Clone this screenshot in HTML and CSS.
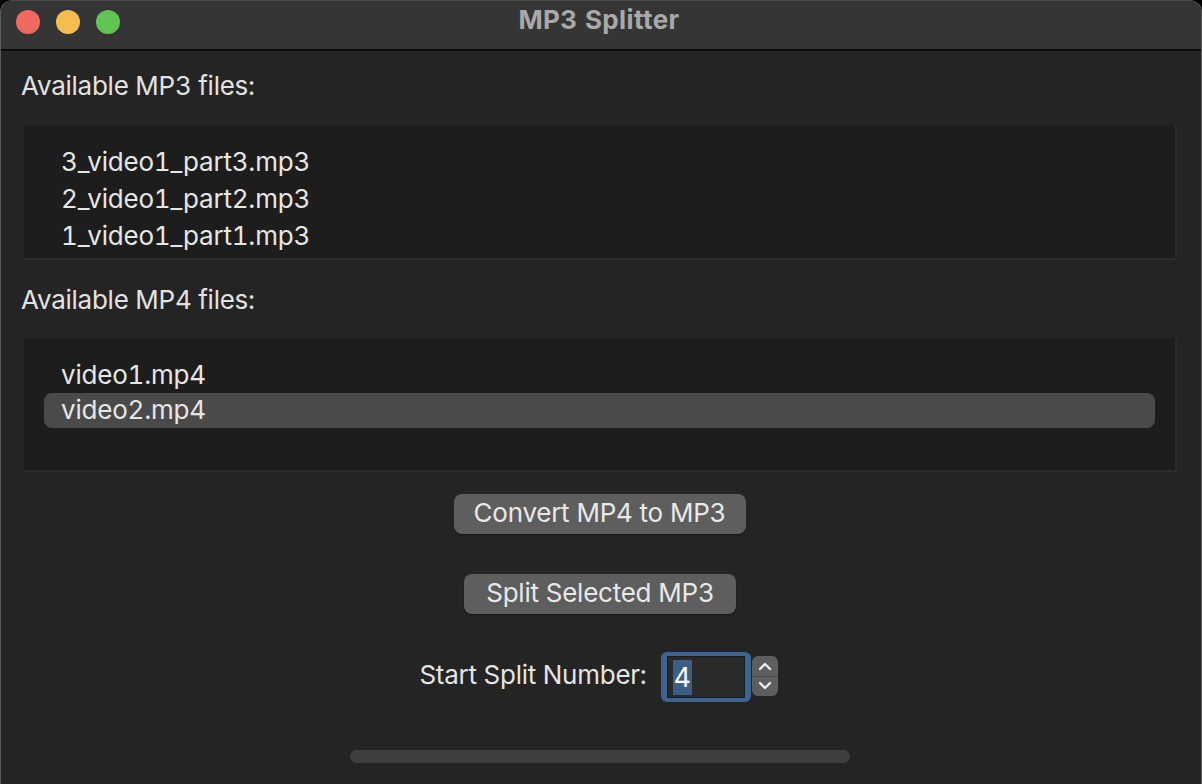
FILE: index.html
```html
<!DOCTYPE html>
<html>
<head>
<meta charset="utf-8">
<link rel="stylesheet" href="styles.css">
</head>
<body>
<div class="window">
  <div class="titlebar">
    <div class="lights">
      <span class="light red"></span>
      <span class="light yellow"></span>
      <span class="light green"></span>
    </div>
    <div class="title">MP3 Splitter</div>
  </div>
  <div class="content">
    <div class="label mp3-label">Available MP3 files:</div>
    <div class="listbox mp3-list">
      <div class="item">3_video1_part3.mp3</div>
      <div class="item">2_video1_part2.mp3</div>
      <div class="item">1_video1_part1.mp3</div>
    </div>
    <div class="label mp4-label">Available MP4 files:</div>
    <div class="listbox mp4-list">
      <div class="item item4">video1.mp4</div>
      <div class="item item4 selected">video2.mp4</div>
    </div>
    <div class="actions">
      <button class="btn btn-convert">Convert MP4 to MP3</button>
      <button class="btn btn-split">Split Selected MP3</button>
      <div class="number-row">
        <span class="num-label">Start Split Number:</span>
        <div class="focus-ring">
          <div class="num-input"><span class="sel">4</span></div>
        </div>
        <div class="stepper">
          <div class="step up"><svg width="16" height="10" viewBox="0 0 16 10"><path d="M3 8 L8 3 L13 8" fill="none" stroke="#ececec" stroke-width="2.4" stroke-linecap="round" stroke-linejoin="round"/></svg></div>
          <div class="step down"><svg width="16" height="10" viewBox="0 0 16 10"><path d="M3 2 L8 7 L13 2" fill="none" stroke="#ececec" stroke-width="2.4" stroke-linecap="round" stroke-linejoin="round"/></svg></div>
        </div>
      </div>
      <div class="progress"></div>
    </div>
  </div>
</div>
</body>
</html>
```

FILE: styles.css
```css
* { box-sizing: border-box; }
html, body {
  margin: 0;
  padding: 0;
  width: 1202px;
  height: 784px;
  background: #000;
  overflow: hidden;
}
body {
  font-family: Inter, "Noto Sans", "Liberation Sans", sans-serif;
  color: #e4e4e4;
  font-variant-numeric: tabular-nums;
}
.window {
  width: 1202px;
  height: 784px;
  background: #242424;
  border-radius: 12px 12px 0 0;
  border-left: 1px solid #5a5a5a;
  border-right: 1px solid #5a5a5a;
  border-top: 1px solid #4a4a4a;
  overflow: hidden;
  display: flex;
  flex-direction: column;
}
.titlebar {
  height: 50px;
  background: #353535;
  border-bottom: 2px solid #0c0c0c;
  display: flex;
  align-items: center;
  position: relative;
  flex-shrink: 0;
}
.lights {
  display: flex;
  gap: 16px;
  padding-left: 15px;
  margin-top: -7px;
}
.light {
  width: 24px;
  height: 24px;
  border-radius: 50%;
  display: block;
}
.red { background: #ee6a5f; }
.yellow { background: #f5bd4f; }
.green { background: #61c454; }
.title {
  position: absolute;
  left: 0;
  right: 0;
  top: 3px;
  text-align: center;
  font-weight: 700;
  font-size: 26px;
  line-height: 32px;
  color: #a9a9a9;
  letter-spacing: 0.4px;
  padding-right: 4px;
}
.content {
  padding: 0 0 0 20px;
  display: flex;
  flex-direction: column;
}
.label {
  font-size: 26px;
  color: #e2e2e2;
  line-height: 26px;
  letter-spacing: -0.25px;
}
.mp3-label { margin-top: 22px; }
.mp4-label { margin-top: 27px; }
.listbox {
  margin-left: 3px;
  width: 1153px;
  background: #1d1d1d;
  border-right: 2px solid #2c2c2c;
  border-bottom: 2px solid #2c2c2c;
  padding: 18px 20px 0 20px;
}
.mp3-list {
  margin-top: 26px;
  height: 135px;
}
.mp4-list {
  margin-top: 25px;
  height: 134px;
  padding-top: 19px;
}
.item {
  font-size: 26px;
  line-height: 37px;
  height: 37px;
  padding-left: 17px;
  color: #e6e6e6;
  letter-spacing: -0.2px;
}
.item4 {
  line-height: 35px;
  height: 35px;
}
.selected {
  background: #4a4a4a;
  border-radius: 8px;
  line-height: 34px;
  margin-top: 1px;
}
.actions {
  display: flex;
  flex-direction: column;
  align-items: center;
  margin-left: -20px;
}
.btn {
  font-family: inherit;
  font-size: 26px;
  letter-spacing: -0.25px;
  line-height: 36px;
  color: #e8e8e8;
  background: #5e5e5e;
  border: none;
  border-radius: 8px;
  height: 40px;
  padding: 0 0 3px 0;
  box-shadow: 0 1px 1px rgba(0,0,0,0.4);
}
.btn-convert {
  margin-top: 22px;
  width: 292px;
  margin-left: -3px;
}
.btn-split {
  margin-top: 40px;
  width: 272px;
  margin-left: -2px;
}
.number-row {
  display: flex;
  align-items: center;
  margin-top: 38px;
  margin-left: -5px;
}
.num-label {
  font-size: 26px;
  letter-spacing: -0.25px;
  color: #e4e4e4;
  margin-right: 14px;
  margin-top: -5px;
}
.focus-ring {
  width: 90px;
  height: 50px;
  border-radius: 6px;
  background: #3c6593;
  padding: 4px 6px;
}
.num-input {
  width: 100%;
  height: 100%;
  background: #2a2a2a;
  border: 1px solid #1c1c1c;
  display: flex;
  align-items: center;
  padding-left: 5px;
}
.sel {
  background: #3b5e86;
  color: #ffffff;
  font-size: 27px;
  line-height: 35px;
  padding: 0 1px;
}
.stepper {
  width: 26px;
  height: 40px;
  background: #5e5e5e;
  border-radius: 6px;
  margin-left: 1px;
  margin-top: -2px;
  display: flex;
  flex-direction: column;
}
.step {
  flex: 1;
  display: flex;
  align-items: center;
  justify-content: center;
}
.step.up { border-bottom: 1px solid #4a4a4a; }
.progress {
  margin-top: 48px;
  width: 500px;
  height: 13px;
  border-radius: 7px;
  background: #3e3e3e;
  margin-left: -2px;
}
```
